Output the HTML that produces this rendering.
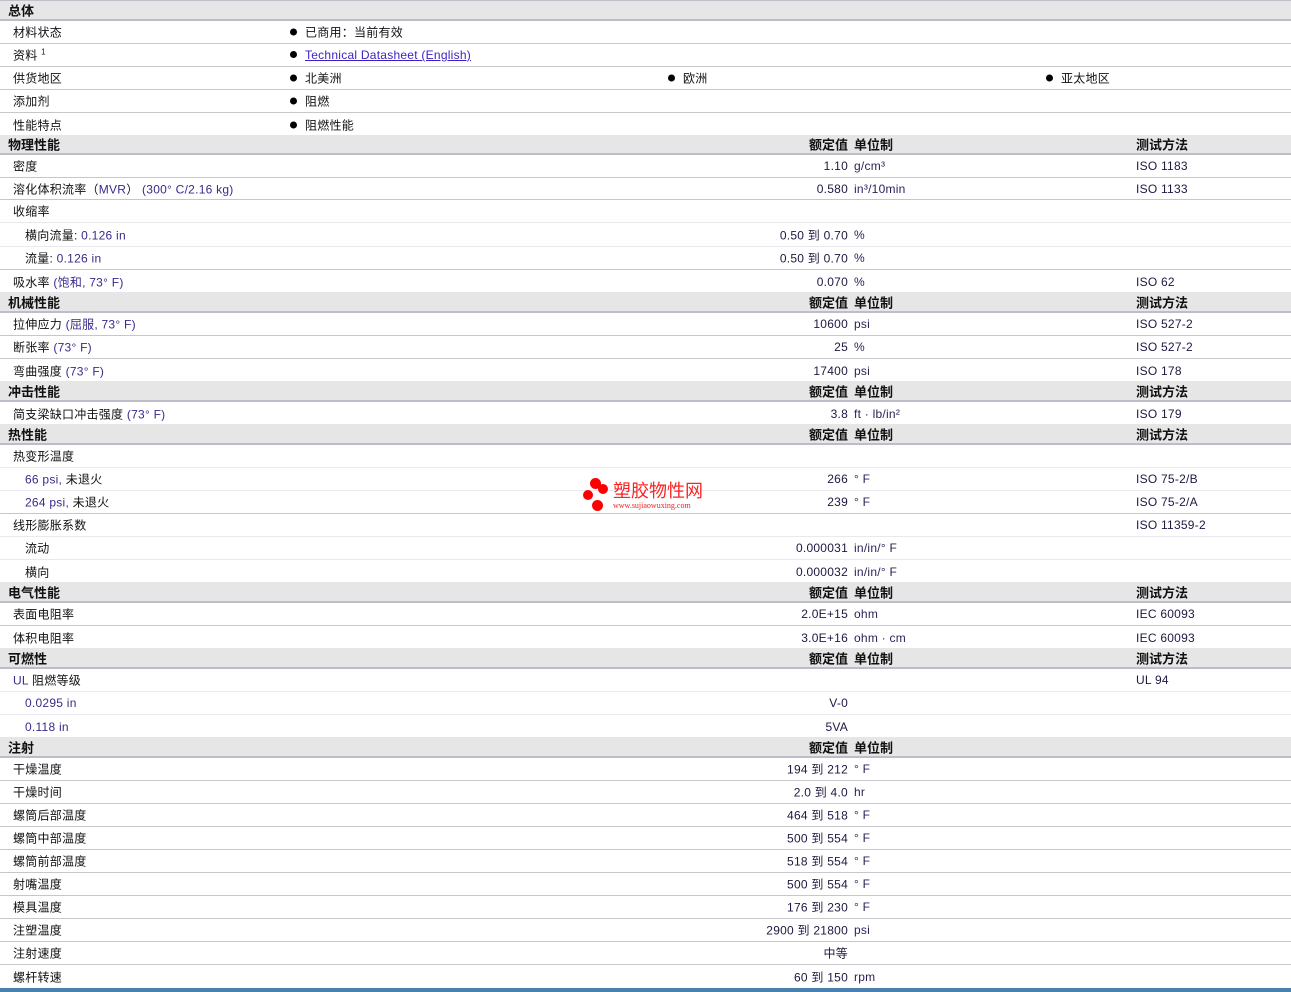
<!DOCTYPE html>
<html><head><meta charset="utf-8"><style>
body{margin:0;width:1291px;height:992px;overflow:hidden;background:#fff;position:relative;font-family:"Liberation Sans","Noto Sans CJK SC",sans-serif;font-size:12px;color:#111;letter-spacing:0.25px}
.r{position:absolute;left:0;width:1291px;border-bottom:1px solid #c6c6cc;box-sizing:border-box}
.r.t{border-bottom-color:#e8e8ee}
.h{background:#e6e6e6;border-bottom:2px solid #bdbdc8;font-weight:bold;font-size:13px;letter-spacing:0}
.r span{position:absolute;top:50%;transform:translateY(-50%);white-space:nowrap}
.r span span{position:static;transform:none}
.l{left:13px}.s{left:25px}.hl{left:8px}
.v{right:443px;text-align:right;color:#1e1840}
.u{left:854px;color:#2a1f55}.m{left:1136px;color:#1e1840}
.p{color:#3a2a8a}
.b1{left:290px}.b2{left:668px}.b3{left:1046px}
.dot{display:inline-block;width:7px;height:7px;border-radius:50%;background:#000;margin-right:8px;vertical-align:1px}
a{color:#3b1fc4;text-decoration:underline}
.hv{right:443px}.hu{left:854px}.hm{left:1136px}
</style></head><body>
<div style="position:absolute;top:0;left:0;width:1291px;height:1px;background:#c0c0c8"></div>
<div class="r h" style="top:1px;height:20px"><span class="hl">总体</span></div>
<div class="r" style="top:21px;height:23px"><span class="l">材料状态</span><span class="b1"><i class="dot"></i>已商用：当前有效</span></div>
<div class="r" style="top:44px;height:23px"><span class="l">资料 <sup style="font-size:8px">1</sup></span><span class="b1"><i class="dot"></i><a>Technical Datasheet (English)</a></span></div>
<div class="r" style="top:67px;height:23px"><span class="l">供货地区</span><span class="b1"><i class="dot"></i>北美洲</span><span class="b2"><i class="dot"></i>欧洲</span><span class="b3"><i class="dot"></i>亚太地区</span></div>
<div class="r" style="top:90px;height:23px"><span class="l">添加剂</span><span class="b1"><i class="dot"></i>阻燃</span></div>
<div class="r" style="top:113px;height:23px;border:0"><span class="l">性能特点</span><span class="b1"><i class="dot"></i>阻燃性能</span></div>

<div class="r h" style="top:135px;height:20px"><span class="hl">物理性能</span><span class="hv">额定值</span><span class="hu">单位制</span><span class="hm">测试方法</span></div>
<div class="r" style="top:155px;height:23px"><span class="l">密度</span><span class="v">1.10</span><span class="u">g/cm³</span><span class="m">ISO 1183</span></div>
<div class="r" style="top:178px;height:22px"><span class="l">溶化体积流率（<span class="p">MVR</span>） <span class="p">(300° C/2.16 kg)</span></span><span class="v">0.580</span><span class="u">in³/10min</span><span class="m">ISO 1133</span></div>
<div class="r t" style="top:200px;height:23px"><span class="l">收缩率</span></div>
<div class="r t" style="top:223px;height:24px"><span class="s">横向流量: <span class="p">0.126 in</span></span><span class="v">0.50 到 0.70</span><span class="u">%</span></div>
<div class="r" style="top:247px;height:23px"><span class="s">流量: <span class="p">0.126 in</span></span><span class="v">0.50 到 0.70</span><span class="u">%</span></div>
<div class="r" style="top:270px;height:23px;border:0"><span class="l">吸水率 <span class="p">(饱和, 73° F)</span></span><span class="v">0.070</span><span class="u">%</span><span class="m">ISO 62</span></div>

<div class="r h" style="top:292px;height:21px"><span class="hl">机械性能</span><span class="hv">额定值</span><span class="hu">单位制</span><span class="hm">测试方法</span></div>
<div class="r" style="top:313px;height:23px"><span class="l">拉伸应力 <span class="p">(屈服, 73° F)</span></span><span class="v">10600</span><span class="u">psi</span><span class="m">ISO 527-2</span></div>
<div class="r" style="top:336px;height:23px"><span class="l">断张率 <span class="p">(73° F)</span></span><span class="v">25</span><span class="u">%</span><span class="m">ISO 527-2</span></div>
<div class="r" style="top:359px;height:23px;border:0"><span class="l">弯曲强度 <span class="p">(73° F)</span></span><span class="v">17400</span><span class="u">psi</span><span class="m">ISO 178</span></div>

<div class="r h" style="top:381px;height:21px"><span class="hl">冲击性能</span><span class="hv">额定值</span><span class="hu">单位制</span><span class="hm">测试方法</span></div>
<div class="r" style="top:402px;height:23px;border:0"><span class="l">简支梁缺口冲击强度 <span class="p">(73° F)</span></span><span class="v">3.8</span><span class="u">ft · lb/in²</span><span class="m">ISO 179</span></div>

<div class="r h" style="top:424px;height:21px"><span class="hl">热性能</span><span class="hv">额定值</span><span class="hu">单位制</span><span class="hm">测试方法</span></div>
<div class="r t" style="top:445px;height:23px"><span class="l">热变形温度</span></div>
<div class="r t" style="top:468px;height:23px"><span class="s"><span class="p">66 psi,</span> 未退火</span><span class="v">266</span><span class="u">° F</span><span class="m">ISO 75-2/B</span></div>
<div class="r" style="top:491px;height:23px"><span class="s"><span class="p">264 psi,</span> 未退火</span><span class="v">239</span><span class="u">° F</span><span class="m">ISO 75-2/A</span></div>
<div class="r t" style="top:514px;height:23px"><span class="l">线形膨胀系数</span><span class="m">ISO 11359-2</span></div>
<div class="r t" style="top:537px;height:23px"><span class="s">流动</span><span class="v">0.000031</span><span class="u">in/in/° F</span></div>
<div class="r" style="top:560px;height:23px;border:0"><span class="s">横向</span><span class="v">0.000032</span><span class="u">in/in/° F</span></div>

<div class="r h" style="top:582px;height:21px"><span class="hl">电气性能</span><span class="hv">额定值</span><span class="hu">单位制</span><span class="hm">测试方法</span></div>
<div class="r" style="top:603px;height:23px"><span class="l">表面电阻率</span><span class="v">2.0E+15</span><span class="u">ohm</span><span class="m">IEC 60093</span></div>
<div class="r" style="top:626px;height:23px;border:0"><span class="l">体积电阻率</span><span class="v">3.0E+16</span><span class="u">ohm · cm</span><span class="m">IEC 60093</span></div>

<div class="r h" style="top:648px;height:21px"><span class="hl">可燃性</span><span class="hv">额定值</span><span class="hu">单位制</span><span class="hm">测试方法</span></div>
<div class="r t" style="top:669px;height:23px"><span class="l"><span class="p">UL</span> 阻燃等级</span><span class="m">UL 94</span></div>
<div class="r t" style="top:692px;height:23px"><span class="s p">0.0295 in</span><span class="v">V-0</span></div>
<div class="r" style="top:715px;height:23px;border:0"><span class="s p">0.118 in</span><span class="v">5VA</span></div>

<div class="r h" style="top:737px;height:21px"><span class="hl">注射</span><span class="hv">额定值</span><span class="hu">单位制</span></div>
<div class="r" style="top:758px;height:23px"><span class="l">干燥温度</span><span class="v">194 到 212</span><span class="u">° F</span></div>
<div class="r" style="top:781px;height:23px"><span class="l">干燥时间</span><span class="v">2.0 到 4.0</span><span class="u">hr</span></div>
<div class="r" style="top:804px;height:23px"><span class="l">螺筒后部温度</span><span class="v">464 到 518</span><span class="u">° F</span></div>
<div class="r" style="top:827px;height:23px"><span class="l">螺筒中部温度</span><span class="v">500 到 554</span><span class="u">° F</span></div>
<div class="r" style="top:850px;height:23px"><span class="l">螺筒前部温度</span><span class="v">518 到 554</span><span class="u">° F</span></div>
<div class="r" style="top:873px;height:23px"><span class="l">射嘴温度</span><span class="v">500 到 554</span><span class="u">° F</span></div>
<div class="r" style="top:896px;height:23px"><span class="l">模具温度</span><span class="v">176 到 230</span><span class="u">° F</span></div>
<div class="r" style="top:919px;height:23px"><span class="l">注塑温度</span><span class="v">2900 到 21800</span><span class="u">psi</span></div>
<div class="r" style="top:942px;height:23px"><span class="l">注射速度</span><span class="v">中等</span></div>
<div class="r" style="top:965px;height:23px;border:0"><span class="l">螺杆转速</span><span class="v">60 到 150</span><span class="u">rpm</span></div>
<div style="position:absolute;top:988px;left:0;width:1291px;height:4px;background:#4a7fb0"></div>

<div style="position:absolute;left:583px;top:478px;width:130px;height:36px">
<div style="position:absolute;left:7px;top:0;width:11px;height:11px;border-radius:50%;background:#f00"></div>
<div style="position:absolute;left:15px;top:6px;width:10px;height:10px;border-radius:50%;background:#f00"></div>
<div style="position:absolute;left:0;top:12px;width:10px;height:10px;border-radius:50%;background:#f00"></div>
<div style="position:absolute;left:9px;top:22px;width:11px;height:11px;border-radius:50%;background:#f00"></div>
<div style="position:absolute;left:30px;top:4px;font-size:18px;color:#f22;white-space:nowrap;line-height:18px;letter-spacing:0">塑胶物性网</div>
<div style="position:absolute;left:30px;top:23px;font-size:8px;color:#e22;font-family:'Liberation Serif',serif;white-space:nowrap;letter-spacing:0">www.sujiaowuxing.com</div>
</div>
</body></html>
